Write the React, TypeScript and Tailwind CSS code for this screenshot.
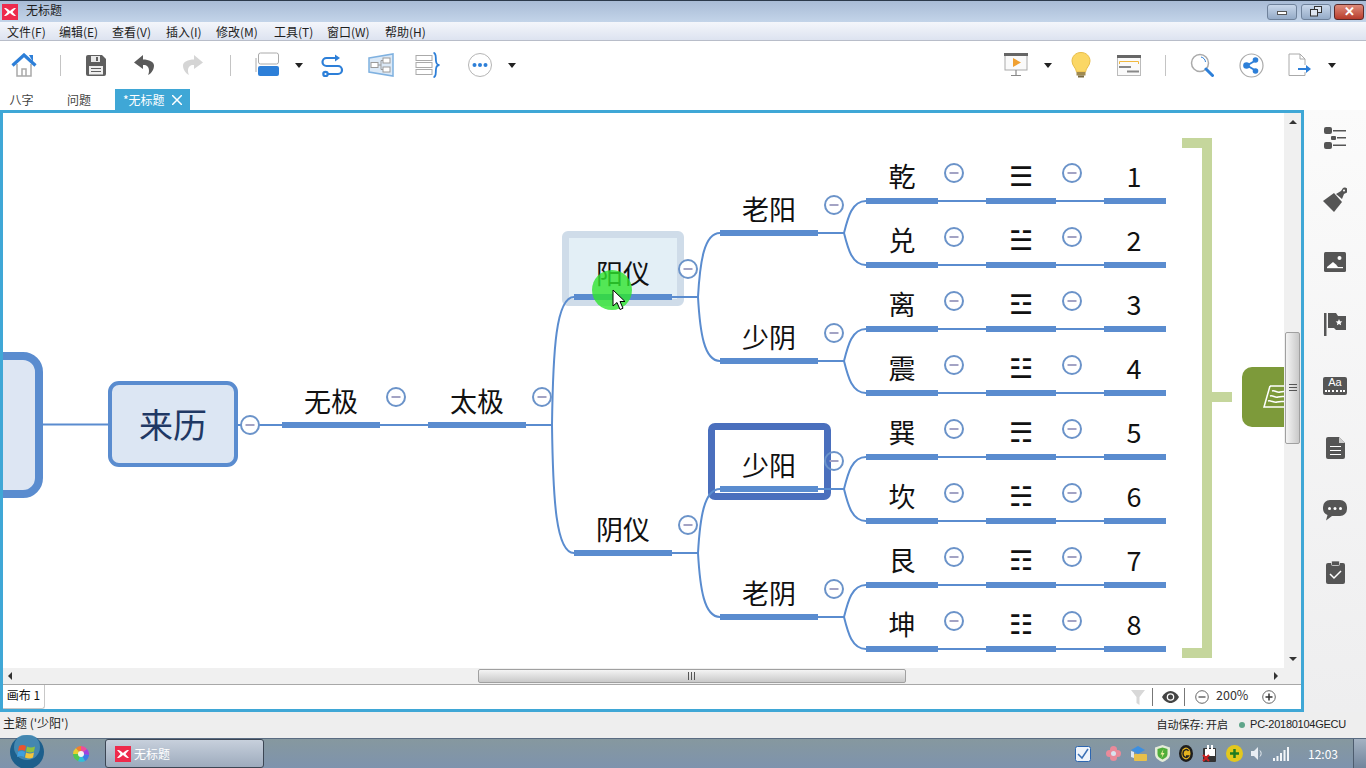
import React from 'react';

const BLUE = '#5a8ccf';
const ORIGIN_X = 3;
const ORIGIN_Y = 113;

type Label = { text: string; cx: number; cy: number };

const menuItems = [
  { label: '文件(F)', w: 'w-[52px]' },
  { label: '编辑(E)', w: 'w-[53px]' },
  { label: '查看(V)', w: 'w-[54px]' },
  { label: '插入(I)', w: 'w-[50px]' },
  { label: '修改(M)', w: 'w-[58px]' },
  { label: '工具(T)', w: 'w-[53px]' },
  { label: '窗口(W)', w: 'w-[58px]' },
  { label: '帮助(H)', w: 'w-[52px]' },
];

const branchLabels: Label[] = [
  { text: '无极', cx: 331, cy: 401 },
  { text: '太极', cx: 477, cy: 401 },
  { text: '阳仪', cx: 623, cy: 273 },
  { text: '阴仪', cx: 623, cy: 529 },
  { text: '老阳', cx: 769, cy: 209 },
  { text: '少阴', cx: 769, cy: 337 },
  { text: '少阳', cx: 769, cy: 465 },
  { text: '老阴', cx: 769, cy: 593 },
];

const leaves = [
  { name: '乾', gua: '☰', num: '1', y: 201 },
  { name: '兑', gua: '☱', num: '2', y: 265 },
  { name: '离', gua: '☲', num: '3', y: 329 },
  { name: '震', gua: '☳', num: '4', y: 393 },
  { name: '巽', gua: '☴', num: '5', y: 457 },
  { name: '坎', gua: '☵', num: '6', y: 521 },
  { name: '艮', gua: '☶', num: '7', y: 585 },
  { name: '坤', gua: '☷', num: '8', y: 649 },
];

const underlines: [number, number, number][] = [
  [282, 380, 425],
  [428, 526, 425],
  [574, 672, 297],
  [574, 672, 553],
  [720, 818, 233],
  [720, 818, 361],
  [720, 818, 489],
  [720, 818, 617],
];

const collapsers: [number, number][] = [
  [250, 425],
  [396, 397],
  [542, 397],
  [688, 269],
  [688, 525],
  [834, 205],
  [834, 333],
  [834, 461],
  [834, 589],
];

const Caret = () => <div className="h-0 w-0 border-x-[4px] border-t-[5px] border-x-transparent border-t-[#222]" />;

const ToolSep = ({ w }: { w: string }) => (
  <div className={`${w} flex justify-center`}>
    <div className="h-[21px] w-px bg-[#c4c4c4]" />
  </div>
);

const HomeIcon = () => (
  <svg width="26" height="24" viewBox="0 0 26 24" fill="none">
    <path d="M6 11v12h14V11" stroke="#a9a9a9" strokeWidth="1.5" />
    <path d="M11 23v-7h4v7" stroke="#a9a9a9" strokeWidth="1.5" />
    <path d="M1.500 12.500 13 2l11.500 10.500" stroke="#2d7fd8" strokeWidth="3.200" />
    <path d="M18 2h4v7z" fill="#2d7fd8" />
  </svg>
);

const SaveIcon = () => (
  <svg width="20" height="21" viewBox="0 0 20 21">
    <path d="M2 0h14l4 4v15a2 2 0 0 1-2 2H2a2 2 0 0 1-2-2V2a2 2 0 0 1 2-2z" fill="#5f5f5f" />
    <rect x="5" y="1" width="9" height="6" fill="#e8e8e8" />
    <rect x="10" y="2" width="2" height="4" fill="#5f5f5f" />
    <rect x="3" y="11" width="14" height="8.500" fill="#efefef" />
    <path d="M5 13.500h10M5 16.500h10" stroke="#5f5f5f" strokeWidth="1.200" />
  </svg>
);

const UndoIcon = ({ color, flip }: { color: string; flip?: boolean }) => (
  <svg width="20" height="22" viewBox="0 0 20 22" className={flip ? '-scale-x-100' : ''}>
    <path d="M9 1 0 8.500 9 15v-4c4-.5 6 2 6 6 0 2-1 4-1 4 4-2 6-6 6-9.500C20 8 15 5.500 9 5.500z" fill={color} />
  </svg>
);

const LayoutIcon = () => (
  <svg width="24" height="26" viewBox="0 0 24 26" fill="none">
    <rect x="3.500" y="1" width="20" height="11" rx="2" fill="#fff" stroke="#aaa" />
    <path d="M1 6v14" stroke="#aaa" />
    <rect x="3" y="14" width="21" height="10" rx="2" fill="#2d7fd8" />
  </svg>
);

const RelationIcon = () => (
  <svg width="24" height="24" viewBox="0 0 24 24" fill="none" stroke="#2d7fd8" strokeWidth="2.200">
    <path d="M18 5H6.500a3.500 3.500 0 0 0 0 8H18a3.500 3.500 0 0 1 0 8H8" />
    <path d="m15 1.500 5 3.500-5 3.500z" fill="#2d7fd8" stroke="none" />
    <circle cx="5.500" cy="21" r="2.200" />
  </svg>
);

const BoundaryIcon = () => (
  <svg width="26" height="24" viewBox="0 0 26 24" fill="none">
    <path d="M1 5 25 1v22L1 19z" fill="#dbe9f7" stroke="#7fb1e0" strokeWidth="1.500" />
    <rect x="3" y="9.500" width="7" height="5" fill="#fff" stroke="#9a9a9a" />
    <rect x="15" y="5" width="7" height="5" fill="#fff" stroke="#9a9a9a" />
    <rect x="15" y="14" width="7" height="5" fill="#fff" stroke="#9a9a9a" />
    <path d="M10 12h3M13 7.500v9M13 7.500h2M13 16.500h2" stroke="#9a9a9a" />
  </svg>
);

const SummaryIcon = () => (
  <svg width="26" height="26" viewBox="0 0 26 26" fill="none">
    <rect x="1" y="3.500" width="16" height="5" fill="#fff" stroke="#aaa" />
    <rect x="1" y="10.500" width="16" height="5" fill="#fff" stroke="#aaa" />
    <rect x="1" y="17.500" width="16" height="5" fill="#fff" stroke="#aaa" />
    <path d="M18.500 1c3 0 2 4 2.500 8 .2 2 1.500 4 3.500 4-2 0-3.300 2-3.500 4-.5 4 .5 8-2.500 8" stroke="#2d7fd8" strokeWidth="1.800" />
  </svg>
);

const MoreIcon = () => (
  <svg width="26" height="26" viewBox="0 0 26 26" fill="none">
    <circle cx="13" cy="13" r="11.500" fill="#fff" stroke="#b5b5b5" />
    <circle cx="7.500" cy="13" r="2" fill="#2d7fd8" />
    <circle cx="13" cy="13" r="2" fill="#2d7fd8" />
    <circle cx="18.500" cy="13" r="2" fill="#2d7fd8" />
  </svg>
);

const PresentIcon = () => (
  <svg width="26" height="24" viewBox="0 0 26 24" fill="none">
    <rect x="2" y="2" width="22" height="15" fill="#fafafa" stroke="#aaa" />
    <rect x="1" y="0" width="24" height="3" fill="#666" />
    <path d="m10 5 8 4.500-8 4.500z" fill="#f0a030" />
    <path d="M13 17v5M8 22.500h10" stroke="#888" strokeWidth="1.200" />
  </svg>
);

const BulbIcon = () => (
  <svg width="20" height="26" viewBox="0 0 20 26">
    <path d="M10 .5C4.500.5 1 4.500 1 9c0 5 4 6.500 4.500 11h9c.5-4.500 4.500-6 4.500-11 0-4.500-3.500-8.500-9-8.500z" fill="#fbd765" stroke="#e8bd4a" />
    <rect x="5.500" y="20" width="9" height="3.500" fill="#a08a50" />
    <rect x="7" y="23.500" width="6" height="2" fill="#7a6a40" />
  </svg>
);

const CardIcon = () => (
  <svg width="24" height="21" viewBox="0 0 24 21" fill="none">
    <rect x=".5" y="1" width="23" height="19.500" fill="#fafafa" stroke="#bbb" />
    <rect y="0" width="24" height="3" fill="#666" />
    <path d="M2.500 9V6.500h19V9" stroke="#f0b840" />
    <rect x="2" y="11" width="12" height="2" fill="#888" />
    <rect x="10" y="15.500" width="12" height="2" fill="#888" />
  </svg>
);

const SearchIcon = () => (
  <svg width="24" height="24" viewBox="0 0 24 24" fill="none">
    <circle cx="10" cy="10" r="8.500" fill="#fff" stroke="#aaa" strokeWidth="1.500" />
    <path d="M11 4c2.500.5 4.300 2.500 4.500 5" stroke="#2d7fd8" />
    <path d="m16 16 6.500 6.500" stroke="#2d7fd8" strokeWidth="3" strokeLinecap="round" />
  </svg>
);

const ShareIcon = () => (
  <svg width="25" height="25" viewBox="0 0 25 25" fill="none">
    <circle cx="12.500" cy="12.500" r="11.500" fill="#fff" stroke="#aaa" strokeWidth="1.200" />
    <path d="m8 12.500 8.500-5M8 12.500l8.500 5" stroke="#2d7fd8" strokeWidth="2" />
    <circle cx="7.500" cy="12.500" r="3.300" fill="#2d7fd8" />
    <circle cx="16.500" cy="7" r="2.800" fill="#2d7fd8" />
    <circle cx="16.500" cy="18" r="2.800" fill="#2d7fd8" />
  </svg>
);

const ExportIcon = () => (
  <svg width="24" height="24" viewBox="0 0 24 24" fill="none">
    <path d="M1 1h11l5 5v6M17 19v3.500H1V1" fill="#fff" stroke="#aaa" />
    <path d="M12 1v5h5" stroke="#aaa" />
    <path d="M10 16h10" stroke="#2d7fd8" strokeWidth="2" />
    <path d="m18 12 5 4-5 4z" fill="#2d7fd8" />
  </svg>
);

const XLogo = ({ size }: { size: number }) => (
  <svg width={size} height={size} viewBox="0 0 16 16">
    <rect width="16" height="16" fill="#ee2a4c" />
    <path d="M2 4c2 0 3.500.5 6 3 2.500-2.500 4-3 6-3l-3.500 4 3.500 4c-2 0-3.500-.5-6-3-2.500 2.500-4 3-6 3l3.500-4z" fill="#fff" />
  </svg>
);

const SideIcon = ({ children }: { children: React.ReactNode }) => (
  <div className="flex h-6 w-6 items-center justify-center">{children}</div>
);

const Sidebar = () => (
  <div className="flex w-[62px] flex-col items-center gap-[38px] bg-gradient-to-b from-[#fbfbfb] to-[#eeeeef] pt-4">
    <SideIcon>
      <svg width="22" height="22" viewBox="0 0 22 22" fill="#555">
        <rect x="0" y="0" width="8" height="7" rx="2" />
        <rect x="0" y="15" width="8" height="7" rx="2" />
        <rect x="7" y="9" width="5" height="4" rx="1" />
        <rect x="9" y="3" width="13" height="1.500" />
        <rect x="13" y="10" width="9" height="1.500" />
        <rect x="9" y="17.500" width="13" height="1.500" />
      </svg>
    </SideIcon>
    <SideIcon>
      <svg width="24" height="26" viewBox="0 0 24 26" fill="#555">
        <path d="M0 14 11 6l8 9-8 10z" />
        <path d="m13 7 5-3 2-3c1-1 3-.5 4 .5s1 3 0 4l-3 1.500-2 5z" />
        <circle cx="21" cy="3.500" r="1" fill="#fff" />
      </svg>
    </SideIcon>
    <SideIcon>
      <svg width="22" height="20" viewBox="0 0 22 20">
        <rect width="22" height="20" rx="1.500" fill="#555" />
        <circle cx="15.500" cy="6" r="2" fill="#fff" />
        <path d="m3 15 6-5 3 2.500 2 2.500z" fill="#fff" />
        <rect x="3" y="15" width="16" height="1.200" fill="#fff" />
      </svg>
    </SideIcon>
    <SideIcon>
      <svg width="22" height="23" viewBox="0 0 22 23">
        <rect width="2.500" height="23" fill="#555" />
        <path d="M4 0h8l2 3h8v14H12l-2-2H4z" fill="#555" />
        <path d="m15 6 1 2.200 2.300.2-1.700 1.500.5 2.300-2.100-1.200-2.100 1.200.5-2.300-1.700-1.500 2.300-.2z" fill="#fff" />
      </svg>
    </SideIcon>
    <SideIcon>
      <div className="flex h-[18px] w-6 flex-col items-center rounded-[2px] bg-[#555]">
        <span className="text-[11px] leading-[11px] text-white [font-family:'Liberation_Sans',sans-serif]">Aa</span>
        <div className="mt-[2px] w-5 border-t-2 border-dotted border-white" />
      </div>
    </SideIcon>
    <SideIcon>
      <svg width="19" height="22" viewBox="0 0 19 22">
        <path d="M2 0h11l6 6v14a2 2 0 0 1-2 2H2a2 2 0 0 1-2-2V2a2 2 0 0 1 2-2z" fill="#555" />
        <path d="M13 0v6h6z" fill="#ccc" />
        <path d="M4 9.500h11M4 13.500h11M4 17.500h11" stroke="#fff" />
      </svg>
    </SideIcon>
    <SideIcon>
      <svg width="24" height="21" viewBox="0 0 24 21" fill="#555">
        <path d="M7 0h10a7 7 0 0 1 7 7v2a7 7 0 0 1-7 7H9l-6 4.500L4.500 15A7 7 0 0 1 0 9V7a7 7 0 0 1 7-7z" />
        <circle cx="6.500" cy="8.500" r="1.500" fill="#fff" />
        <circle cx="12" cy="8.500" r="1.500" fill="#fff" />
        <circle cx="17.500" cy="8.500" r="1.500" fill="#fff" />
      </svg>
    </SideIcon>
    <SideIcon>
      <svg width="19" height="23" viewBox="0 0 19 23">
        <rect y="2" width="19" height="21" rx="2" fill="#555" />
        <rect x="5.500" y="0" width="8" height="4.500" rx="1" fill="#555" stroke="#f2f2f2" strokeWidth=".7" />
        <path d="m4 13 4 4 7-7" fill="none" stroke="#fff" strokeWidth="1.500" />
      </svg>
    </SideIcon>
  </div>
);

const NodeText = ({ text, cx, cy, size = 27, className = '' }: Label & { size?: number; className?: string }) => (
  <div
    className={`absolute -translate-x-1/2 -translate-y-1/2 whitespace-nowrap leading-none text-[#111] ${className}`}
    style={{ left: cx - ORIGIN_X, top: cy - ORIGIN_Y - 1.5, fontSize: size }}
  >
    {text}
  </div>
);

const GripLines = ({ vertical }: { vertical?: boolean }) => (
  <svg width="8" height="8" viewBox="0 0 8 8" stroke="#555">
    {vertical ? <path d="M.5 0v8M3.500 0v8M6.500 0v8" /> : <path d="M0 .5h8M0 3.500h8M0 6.500h8" />}
  </svg>
);

const MindMap = () => (
  <div className="relative flex-1 overflow-hidden bg-white">
    {/* hover and selection frames sit under the connectors */}
    <div className="absolute left-[559px] top-[118px] h-[75px] w-[122px] rounded-[6px] border-[7px] border-[#cfdce9] bg-[#e3eff6]" />
    <div className="absolute left-[705px] top-[310px] h-[77px] w-[123px] rounded-[7px] border-[7px] border-[#4a6fbd] bg-white" />

    {/* central topic, runs off the left edge */}
    <div className="absolute left-[-60px] top-[239px] h-[146px] w-[100px] rounded-[20px] border-[8px] border-[#5a8ccf] bg-[#dde6f3]" />
    <div className="absolute left-[105px] top-[268px] flex h-[86px] w-[130px] items-center justify-center rounded-[11px] border-[4px] border-[#5a8ccf] bg-[#dce6f3] pb-[2px] text-[34px] text-[#1f3864]">
      来历
    </div>

    <svg className="absolute inset-0" width="1281" height="555" viewBox={`${ORIGIN_X} ${ORIGIN_Y} 1281 555`} fill="none">
      <path d="M42 424.500H108M238 425H282M380 425H428M526 425H552M672 297H698M672 553H698M818 233H844M818 361H844M818 489H844M818 617H844" stroke={BLUE} strokeWidth="2" />
      <path d="M552 425C553 350 556 297 574 297M552 425C553 500 556 553 574 553" stroke={BLUE} strokeWidth="2" />
      <path d="M698 297C700 262 704 233 720 233M698 297C700 332 704 361 720 361" stroke={BLUE} strokeWidth="2" />
      <path d="M698 553C700 518 704 489 720 489M698 553C700 588 704 617 720 617" stroke={BLUE} strokeWidth="2" />
      {[233, 361, 489, 617].map((y) => (
        <path key={y} d={`M844 ${y}C848 ${y - 16} 852 ${y - 32} 866 ${y - 32}M844 ${y}C848 ${y + 16} 852 ${y + 32} 866 ${y + 32}`} stroke={BLUE} strokeWidth="2" />
      ))}
      {underlines.map(([x1, x2, y]) => (
        <rect key={`${x1}-${y}`} x={x1} y={y - 3} width={x2 - x1} height="6" fill={BLUE} />
      ))}
      {leaves.map(({ y }) => (
        <g key={y}>
          <path d={`M938 ${y}H986M1056 ${y}H1104`} stroke={BLUE} strokeWidth="2" />
          <rect x="866" y={y - 3} width="72" height="6" fill={BLUE} />
          <rect x="986" y={y - 3} width="70" height="6" fill={BLUE} />
          <rect x="1104" y={y - 3} width="62" height="6" fill={BLUE} />
          {[954, 1072].map((cx) => (
            <g key={cx}>
              <circle cx={cx} cy={y - 28} r="9" fill="#fff" stroke="#6b93c9" strokeWidth="2" />
              <path d={`M${cx - 4.500} ${y - 28}h9`} stroke="#a3a3c4" strokeWidth="2" />
            </g>
          ))}
        </g>
      ))}
      {collapsers.map(([cx, cy]) => (
        <g key={`${cx}-${cy}`}>
          <circle cx={cx} cy={cy} r="9" fill={cx === 834 && cy === 461 ? '#ffffff00' : '#fff'} stroke="#6b93c9" strokeWidth="2" />
          <path d={`M${cx - 4.500} ${cy}h9`} stroke="#a3a3c4" strokeWidth="2" />
        </g>
      ))}
      {/* boundary bracket on the right */}
      <path d="M1182 143H1207V653H1182M1212 397H1232" stroke="#c5d69c" strokeWidth="10" />
    </svg>

    {branchLabels.map((l) => (
      <NodeText key={l.text} {...l} />
    ))}
    {leaves.map((l) => (
      <React.Fragment key={l.name}>
        <NodeText text={l.name} cx={902} cy={l.y - 25} />
        <NodeText text={l.gua} cx={1021} cy={l.y - 24} className="font-light [font-family:'DejaVu_Sans',sans-serif]" />
        <NodeText text={l.num} cx={1134} cy={l.y - 25} />
      </React.Fragment>
    ))}

    {/* floating topic, cut by the scrollbar */}
    <div className="absolute left-[1239px] top-[254px] flex h-[60px] w-[60px] items-center rounded-[10px] bg-[#7d9a3a] pl-[21px]">
      <svg width="30" height="24" viewBox="0 0 30 24" fill="none" stroke="#fff" strokeWidth="1.500">
        <path d="M7 1h22M7 1 1 22h24" />
        <path d="M9 6c3-1 5 2 8 1s5 0 8-1M7 11c3-1 5 2 8 1s6 0 10-1M5 16c3-1 6 2 9 1s6 0 11-1" />
      </svg>
    </div>

    {/* recording pointer highlight */}
    <div className="absolute left-[589px] top-[157px] h-10 w-10 rounded-full bg-[#2ee52e]/80" />
    <svg className="absolute left-[609px] top-[176px]" width="14" height="22" viewBox="0 0 14 22">
      <path d="M1 1v16l4-3.500 3 7 3-1.300-3-6.700h5z" fill="#fff" stroke="#000" />
    </svg>
  </div>
);

const App = () => (
  <div className="flex h-[768px] w-[1366px] flex-col overflow-hidden bg-white text-[#222] [font-family:'Noto_Sans_CJK_SC','Liberation_Sans',sans-serif]">
    {/* title bar */}
    <div className="flex h-[22px] items-center border-t border-[#2c3a4b] bg-gradient-to-b from-[#a9bcd6] to-[#c3d4e9] pr-[2px]">
      <div className="ml-[2px]">
        <XLogo size={16} />
      </div>
      <span className="mb-[3px] ml-[8px] text-xs leading-none text-[#1c1c1c]">无标题</span>
      <div className="ml-auto flex gap-[3px]">
        <div className="mr-px flex h-[16px] w-[30px] items-center justify-center rounded-[3px] border border-[#6f829b] bg-gradient-to-b from-[#c8d7ea] to-[#95abc7]">
          <div className="mt-[2px] h-[4px] w-[10px] border border-[#555] bg-white" />
        </div>
        <div className="flex h-[16px] w-[30px] items-center justify-center rounded-[3px] border border-[#6f829b] bg-gradient-to-b from-[#c8d7ea] to-[#95abc7]">
          <svg width="12" height="11" viewBox="0 0 12 11" fill="#dfe7f2" stroke="#333">
            <rect x="4.500" y=".5" width="7" height="6" />
            <rect x=".5" y="3.500" width="7" height="6.500" />
          </svg>
        </div>
        <div className="flex h-[16px] w-[30px] items-center justify-center rounded-[3px] border border-[#5a2a2a] bg-gradient-to-b from-[#dd8a7a] to-[#b73b2c]">
          <span className="text-[13px] font-bold leading-none text-white [font-family:'Liberation_Sans',sans-serif]">✕</span>
        </div>
      </div>
    </div>

    {/* menu bar */}
    <div className="flex h-[19px] items-center border-b border-[#b8bdc9] bg-gradient-to-b from-[#f4f6fb] to-[#dde3f0] pl-[7px] text-xs leading-none text-[#1e1e1e]">
      {menuItems.map((m) => (
        <span key={m.label} className={`${m.w} pt-[1px]`}>{m.label}</span>
      ))}
    </div>

    {/* toolbar */}
    <div className="flex h-[47px] items-center bg-white pt-[1px]">
      <div className="flex w-12 justify-center"><HomeIcon /></div>
      <ToolSep w="w-6" />
      <div className="flex w-12 justify-center"><SaveIcon /></div>
      <div className="flex w-12 justify-center"><UndoIcon color="#5a5a5a" /></div>
      <div className="flex w-[50px] justify-center"><UndoIcon color="#d5d5d5" flip /></div>
      <ToolSep w="w-6" />
      <div className="flex w-[50px] justify-center"><LayoutIcon /></div>
      <div className="flex w-[14px] justify-center"><Caret /></div>
      <div className="flex w-[52px] justify-center"><RelationIcon /></div>
      <div className="flex w-[46px] justify-center"><BoundaryIcon /></div>
      <div className="flex w-12 justify-center"><SummaryIcon /></div>
      <div className="flex w-[56px] justify-center"><MoreIcon /></div>
      <Caret />
      <div className="ml-auto flex items-center pr-[26px]">
        <div className="flex w-12 justify-center"><PresentIcon /></div>
        <div className="flex w-4 justify-center"><Caret /></div>
        <div className="flex w-[50px] justify-center"><BulbIcon /></div>
        <div className="flex w-[46px] justify-center"><CardIcon /></div>
        <ToolSep w="w-[26px]" />
        <div className="flex w-12 justify-center"><SearchIcon /></div>
        <div className="flex w-[50px] justify-center"><ShareIcon /></div>
        <div className="flex w-12 justify-center"><ExportIcon /></div>
        <div className="flex w-4 justify-center"><Caret /></div>
      </div>
    </div>

    {/* tabs */}
    <div className="flex h-[22px] items-end pt-[1px] text-xs text-[#444]">
      <div className="flex h-[21px] w-[43px] items-center justify-center">八字</div>
      <div className="flex h-[21px] w-[72px] items-center justify-center">问题</div>
      <div className="flex h-[21px] w-[75px] items-center gap-[7px] bg-[#3fa7d6] pl-[8px] text-white">
        <span>*无标题</span>
        <svg width="10" height="10" viewBox="0 0 10 10" stroke="#fff" strokeWidth="1.500"><path d="m0 0 10 10M10 0 0 10" /></svg>
      </div>
    </div>

    {/* workspace */}
    <div className="flex h-[602px]">
      <div className="flex w-[1304px] flex-col border-[3px] border-[#3fa7d6]">
        <div className="flex flex-1">
          <MindMap />
          <div className="flex w-[17px] flex-col items-center bg-[#f0f0f0] pt-[7px]">
            <div className="h-0 w-0 border-x-[4px] border-b-[4px] border-x-transparent border-b-[#333]" />
            <div className="mt-[208px] flex h-[112px] w-[15px] items-center justify-center rounded-[2px] border border-[#a0a0a0] bg-gradient-to-r from-[#f4f4f4] to-[#c9c9c9]">
              <GripLines />
            </div>
            <div className="mt-[213px] h-0 w-0 border-x-[4px] border-t-[4px] border-x-transparent border-t-[#333]" />
          </div>
        </div>
        <div className="flex h-4 items-center bg-[#f0f0f0] pl-[5px]">
          <div className="h-0 w-0 border-y-[4px] border-r-[4px] border-y-transparent border-r-[#333]" />
          <div className="ml-[466px] flex h-[14px] w-[428px] items-center justify-center rounded-[2px] border border-[#a0a0a0] bg-gradient-to-b from-[#f4f4f4] to-[#c9c9c9]">
            <GripLines vertical />
          </div>
          <div className="ml-[368px] h-0 w-0 border-y-[4px] border-l-[4px] border-y-transparent border-l-[#333]" />
        </div>
        <div className="flex h-[25px] items-stretch border-t border-[#a8a8a8] bg-white text-xs">
          <div className="flex w-[42px] items-center justify-center rounded-br-[3px] border-r border-b border-[#c8c8c8] pb-[3px] leading-none text-[#111]">画布 1</div>
          <div className="ml-auto flex items-center pr-[25px] text-[#333]">
            <svg width="14" height="15" viewBox="0 0 14 15">
              <path d="M0 0h14L8.500 7v8l-3-2V7z" fill="#d8d8d8" />
            </svg>
            <div className="ml-[7px] h-[18px] w-px bg-[#777]" />
            <svg className="ml-[9px]" width="17" height="12" viewBox="0 0 17 12">
              <path d="M0 6c2-3.500 5-6 8.500-6S15 2.500 17 6c-2 3.500-5 6-8.500 6S2 9.500 0 6z" fill="#444" />
              <circle cx="8.500" cy="6" r="3.800" fill="#fff" />
              <circle cx="8.500" cy="6" r="2.500" fill="#444" />
            </svg>
            <div className="ml-[5px] h-[18px] w-px bg-[#777]" />
            <svg className="ml-[10px]" width="14" height="14" viewBox="0 0 14 14" fill="none" stroke="#666">
              <circle cx="7" cy="7" r="6.300" />
              <path d="M3.500 7h7" strokeWidth="1.500" />
            </svg>
            <span className="mb-[3px] ml-[7px] w-[33px] text-[12.500px] leading-none">200%</span>
            <svg className="ml-[13px]" width="14" height="14" viewBox="0 0 14 14" fill="none" stroke="#666">
              <circle cx="7" cy="7" r="6.300" />
              <path d="M3.500 7h7M7 3.500v7" stroke="#333" strokeWidth="1.500" />
            </svg>
          </div>
        </div>
      </div>
      <Sidebar />
    </div>

    {/* status bar */}
    <div className="flex h-[26px] items-center bg-[#eeeeee] pb-[5px] pl-[3px] pr-[20px] text-xs leading-none text-[#222]">
      <span>主题 ('少阳')</span>
      <span className="ml-auto pt-[4px] text-[11px]">自动保存: 开启</span>
      <div className="ml-[11px] mt-[4px] h-[6px] w-[6px] rounded-full bg-[#5fa58a]" />
      <span className="ml-[5px] pt-[4px] text-[11px] tracking-[-0.25px] [font-family:'Liberation_Sans',sans-serif]">PC-20180104GECU</span>
    </div>

    {/* windows taskbar */}
    <div className="flex h-[30px] items-center border-t border-[#5a6c82] bg-gradient-to-b from-[#86989f] to-[#7e93ad]">
      <svg className="ml-[10px] -mt-[3px]" width="34" height="34" viewBox="0 0 34 34">
        <circle cx="17" cy="17" r="17" fill="#1d5f8c" />
        <circle cx="17" cy="12" r="13" fill="#5fa2c8" opacity=".6" />
        <path d="M9 11c3-1.500 5-1 7 0l-1 5c-2-1-4-1.500-7 0z" fill="#e8542f" />
        <path d="M17 11.500c2 1 5 1.500 8 0l-1 5c-3 1.500-5 1-8 0z" fill="#8fc23f" />
        <path d="M8 17c3-1.500 5-1 7 0l-1 5c-2-1-4-1.500-7 0z" fill="#3f9fe0" />
        <path d="M16 17.500c2 1 5 1.500 8 0l-1 5c-3 1.500-5 1-8 0z" fill="#f5c53a" />
      </svg>
      <svg className="ml-[29px]" width="16" height="16" viewBox="0 0 16 16">
        <path d="M8 8 8 0a8 8 0 0 1 6 3z" fill="#f04c9a" />
        <path d="M8 8 14 3a8 8 0 0 1 2 6z" fill="#a040e0" />
        <path d="M8 8 16 9a8 8 0 0 1-4 6z" fill="#3d7be8" />
        <path d="M8 8 12 15a8 8 0 0 1-7 0z" fill="#30c0d8" />
        <path d="M8 8 5 15a8 8 0 0 1-5-7z" fill="#50c850" />
        <path d="M8 8H0a8 8 0 0 1 3-6z" fill="#e8d030" />
        <path d="M8 8 3 2a8 8 0 0 1 5-2z" fill="#f08030" />
        <circle cx="8" cy="8" r="3" fill="#f4f4f4" />
      </svg>
      <div className="ml-[16px] flex h-[29px] w-[159px] items-center gap-[3px] rounded-[3px] border border-[#3c4654] bg-gradient-to-b from-[#c7d0dc] to-[#9eabbd] pl-[9px]">
        <XLogo size={16} />
        <span className="text-xs text-white">无标题</span>
      </div>
      <div className="ml-auto flex items-center">
        <svg width="16" height="16" viewBox="0 0 16 16">
          <rect x=".5" y=".5" width="15" height="15" rx="2" fill="#eef4fb" stroke="#2d66b0" />
          <path d="m3 8 4 4 6-9" fill="none" stroke="#3a70b5" strokeWidth="1.500" />
        </svg>
        <svg className="ml-[15px]" width="15" height="15" viewBox="0 0 15 15">
          <circle cx="7.500" cy="3.500" r="3.500" fill="#e98a9a" />
          <circle cx="3.500" cy="7.500" r="3.500" fill="#e98a9a" />
          <circle cx="11.500" cy="7.500" r="3.500" fill="#e98a9a" />
          <circle cx="7.500" cy="11.500" r="3.500" fill="#e98a9a" />
          <circle cx="7.500" cy="7.500" r="2.500" fill="#d8e2ee" />
        </svg>
        <svg className="ml-[10px]" width="16" height="16" viewBox="0 0 16 16">
          <path d="M0 4 7 0l7 4-7 4z" fill="#3d8fe0" />
          <rect x="3" y="8" width="13" height="7" rx="1" fill="#e8c04a" />
          <path d="M0 5v6l3 1V6z" fill="#dfe8f2" />
        </svg>
        <svg className="ml-[8px]" width="15" height="17" viewBox="0 0 15 17">
          <path d="M7.500 0 15 2.500V9c0 4-3.500 6.500-7.500 8C3.500 15.500 0 13 0 9V2.500z" fill="#e4ecd8" />
          <path d="M7.500 2.500 12.500 4v5c0 2.500-2 4-5 5.500-3-1.500-5-3-5-5.500V4z" fill="#4fae3a" />
          <path d="m8.500 4-3 5.500h2L6.500 13l3-5h-2z" fill="#f0f0a0" />
        </svg>
        <svg className="ml-[9px]" width="14" height="17" viewBox="0 0 14 17">
          <ellipse cx="7" cy="8.500" rx="7" ry="8.500" fill="#1d1d1d" />
          <ellipse cx="7" cy="8.500" rx="4.500" ry="6" fill="#e5b21f" />
          <path d="M9.500 6C8 3.500 4 4.500 4 8.500s4 5 5.500 2.500H7" fill="none" stroke="#222" strokeWidth="1.400" />
        </svg>
        <svg className="ml-[9px]" width="15" height="17" viewBox="0 0 15 17">
          <rect x="1" y="3" width="13" height="14" rx="1" fill="#333" />
          <rect x="5" y="0" width="2" height="5" fill="#fff" />
          <rect x="9" y="0" width="2" height="5" fill="#fff" />
          <rect x="3" y="4" width="10" height="7" fill="#fff" />
          <path d="m1 10 6 6M7 10l-6 6" stroke="#d02020" strokeWidth="2" />
        </svg>
        <svg className="ml-[9px]" width="17" height="17" viewBox="0 0 17 17">
          <circle cx="8.500" cy="8.500" r="8.500" fill="#e3c81d" />
          <path d="M4 8.500h9M8.500 4v9" stroke="#1f7a20" strokeWidth="2.500" />
        </svg>
        <svg className="ml-[7px]" width="14" height="15" viewBox="0 0 14 15" fill="none">
          <path d="M1 5h3l4-4v13l-4-4H1z" fill="#e8edf3" />
          <path d="M10 4.500c1.500 1.500 1.500 4.500 0 6" stroke="#e8edf3" />
        </svg>
        <svg className="ml-[9px]" width="16" height="14" viewBox="0 0 16 14" fill="#f2f5f8">
          <rect x="0" y="11" width="2" height="3" />
          <rect x="3.500" y="9" width="2" height="5" />
          <rect x="7" y="6" width="2" height="8" />
          <rect x="10.500" y="3" width="2" height="11" />
          <rect x="14" y="0" width="2" height="14" />
        </svg>
        <span className="ml-[18px] w-[32px] text-center text-xs text-white">12:03</span>
        <div className="ml-[14px] h-[29px] w-[13px] border-l border-[#4d5c6e] bg-gradient-to-b from-[#a4b2c2] to-[#72859c]" />
      </div>
    </div>
  </div>
);

export default App;
